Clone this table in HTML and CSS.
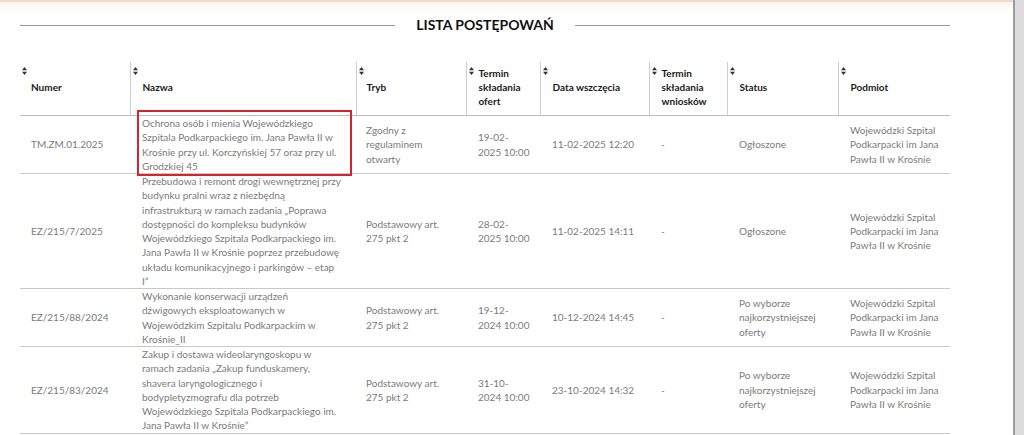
FILE: index.html
```html
<!DOCTYPE html>
<html lang="pl">
<head>
<meta charset="utf-8">
<title>Lista postępowań</title>
<link rel="stylesheet" href="styles.css">
</head>
<body>
<div class="frame">
  <main class="page">
    <div class="topbar"></div>
    <div class="content">
      <h2 class="title"><span class="rule"></span><span class="title-text">LISTA POSTĘPOWAŃ</span><span class="rule"></span></h2>
      <table class="list">
        <colgroup>
          <col class="c1"><col class="c2"><col class="c3"><col class="c4"><col class="c5"><col class="c6"><col class="c7"><col class="c8">
        </colgroup>
        <thead>
          <tr>
            <th><svg class="sort" viewBox="0 0 5 8" width="5" height="8"><path d="M0 3.2 2.5 0 5 3.2Z M0 4.8 5 4.8 2.5 8Z"/></svg>Numer</th>
            <th><svg class="sort" viewBox="0 0 5 8" width="5" height="8"><path d="M0 3.2 2.5 0 5 3.2Z M0 4.8 5 4.8 2.5 8Z"/></svg>Nazwa</th>
            <th class="mode"><svg class="sort" viewBox="0 0 5 8" width="5" height="8"><path d="M0 3.2 2.5 0 5 3.2Z M0 4.8 5 4.8 2.5 8Z"/></svg>Tryb</th>
            <th><svg class="sort" viewBox="0 0 5 8" width="5" height="8"><path d="M0 3.2 2.5 0 5 3.2Z M0 4.8 5 4.8 2.5 8Z"/></svg>Termin składania ofert</th>
            <th><svg class="sort" viewBox="0 0 5 8" width="5" height="8"><path d="M0 3.2 2.5 0 5 3.2Z M0 4.8 5 4.8 2.5 8Z"/></svg>Data wszczęcia</th>
            <th><svg class="sort" viewBox="0 0 5 8" width="5" height="8"><path d="M0 3.2 2.5 0 5 3.2Z M0 4.8 5 4.8 2.5 8Z"/></svg>Termin składania wniosków</th>
            <th><svg class="sort" viewBox="0 0 5 8" width="5" height="8"><path d="M0 3.2 2.5 0 5 3.2Z M0 4.8 5 4.8 2.5 8Z"/></svg>Status</th>
            <th><svg class="sort" viewBox="0 0 5 8" width="5" height="8"><path d="M0 3.2 2.5 0 5 3.2Z M0 4.8 5 4.8 2.5 8Z"/></svg>Podmiot</th>
          </tr>
        </thead>
        <tbody>
          <tr>
            <td>TM.ZM.01.2025</td>
            <td class="name marked">Ochrona osób i mienia Wojewódzkiego Szpitala Podkarpackiego im. Jana Pawła II w Krośnie przy ul. Korczyńskiej 57 oraz przy ul. Grodzkiej 45<span class="highlight"></span></td>
            <td class="mode">Zgodny z regulaminem otwarty</td>
            <td>19-02-2025 10:00</td>
            <td>11-02-2025 12:20</td>
            <td>-</td>
            <td>Ogłoszone</td>
            <td>Wojewódzki Szpital Podkarpacki im Jana Pawła II w Krośnie</td>
          </tr>
          <tr>
            <td>EZ/215/7/2025</td>
            <td class="name">Przebudowa i remont drogi wewnętrznej przy budynku pralni wraz z niezbędną infrastrukturą w ramach zadania „Poprawa dostępności do kompleksu budynków Wojewódzkiego Szpitala Podkarpackiego im. Jana Pawła II w Krośnie poprzez przebudowę układu komunikacyjnego i parkingów – etap I”</td>
            <td class="mode">Podstawowy art. 275 pkt 2</td>
            <td>28-02-2025 10:00</td>
            <td>11-02-2025 14:11</td>
            <td>-</td>
            <td>Ogłoszone</td>
            <td>Wojewódzki Szpital Podkarpacki im Jana Pawła II w Krośnie</td>
          </tr>
          <tr>
            <td>EZ/215/88/2024</td>
            <td class="name">Wykonanie konserwacji urządzeń dźwigowych eksploatowanych w Wojewódzkim Szpitalu Podkarpackim w Krośnie_II</td>
            <td class="mode">Podstawowy art. 275 pkt 2</td>
            <td>19-12-2024 10:00</td>
            <td>10-12-2024 14:45</td>
            <td>-</td>
            <td>Po wyborze najkorzystniejszej oferty</td>
            <td>Wojewódzki Szpital Podkarpacki im Jana Pawła II w Krośnie</td>
          </tr>
          <tr>
            <td>EZ/215/83/2024</td>
            <td class="name">Zakup i dostawa wideolaryngoskopu w ramach zadania „Zakup funduskamery, shavera laryngologicznego i bodypletyzmografu dla potrzeb Wojewódzkiego Szpitala Podkarpackiego im. Jana Pawła II w Krośnie”</td>
            <td class="mode">Podstawowy art. 275 pkt 2</td>
            <td>31-10-2024 10:00</td>
            <td>23-10-2024 14:32</td>
            <td>-</td>
            <td>Po wyborze najkorzystniejszej oferty</td>
            <td>Wojewódzki Szpital Podkarpacki im Jana Pawła II w Krośnie</td>
          </tr>
        </tbody>
      </table>
    </div>
  </main>
  <div class="side"></div>
</div>
</body>
</html>
```

FILE: styles.css
```css
html, body {
  margin: 0;
  padding: 0;
  background: #fff;
}
body {
  font-family: Lato, "Open Sans", sans-serif;
  height: 435px;
  overflow: hidden;
}
.frame {
  display: flex;
  height: 435px;
}
.page {
  flex: 1;
  min-width: 0;
  background: #fff;
}
.side {
  width: 9px;
  background: #dcdcdc;
  border-left: 2px solid #9c9c9c;
}
.topbar {
  height: 10px;
  border-top: 2px solid #f1dac8;
  background: linear-gradient(#fdf5ee, #fff);
}
.content {
  padding: 3px 0 0 20px;
  width: 930px;
}
.title {
  display: flex;
  align-items: center;
  gap: 21px;
  margin: 0 0 27px;
  height: 20px;
  font-size: 14px;
  font-weight: 700;
  color: #111;
  line-height: 20px;
}
.rule {
  flex: 1;
  height: 1px;
  background: #9a9a9a;
}
.title-text {
  white-space: nowrap;
}
.list {
  width: 930px;
  table-layout: fixed;
  border-collapse: collapse;
  font-size: 10px;
}
.c1 { width: 110px; }
.c2 { width: 226px; }
.c3 { width: 110px; }
.c4 { width: 74px; }
.c5 { width: 109px; }
.c6 { width: 78px; }
.c7 { width: 111px; }
.c8 { width: 112px; }
.list th {
  position: relative;
  height: 42px;
  padding: 4px 10px 7px 12px;
  text-align: left;
  vertical-align: middle;
  font-weight: 700;
  line-height: 14px;
  color: #1a1a1a;
  border-left: 1px solid #cfcfcf;
  border-bottom: 1px solid #bdbdbd;
}
.list th:first-child {
  border-left: none;
  padding-left: 11px;
}
.sort {
  position: absolute;
  left: 2px;
  top: 5px;
  fill: #333;
}
.list td {
  padding: 0 10px 0 12px;
  vertical-align: middle;
  line-height: 14.25px;
  color: #7b7b7b;
  border-bottom: 1px solid #c8c8c8;
}
.list td:first-child {
  padding-left: 11px;
}
.list .mode {
  padding-left: 10px;
}
.list td.name {
  padding-right: 14px;
}
.list td.marked {
  position: relative;
}
.highlight {
  position: absolute;
  top: -6px;
  bottom: -3px;
  left: 7px;
  right: 4px;
  border: 2px solid #d6232f;
  pointer-events: none;
}
```
